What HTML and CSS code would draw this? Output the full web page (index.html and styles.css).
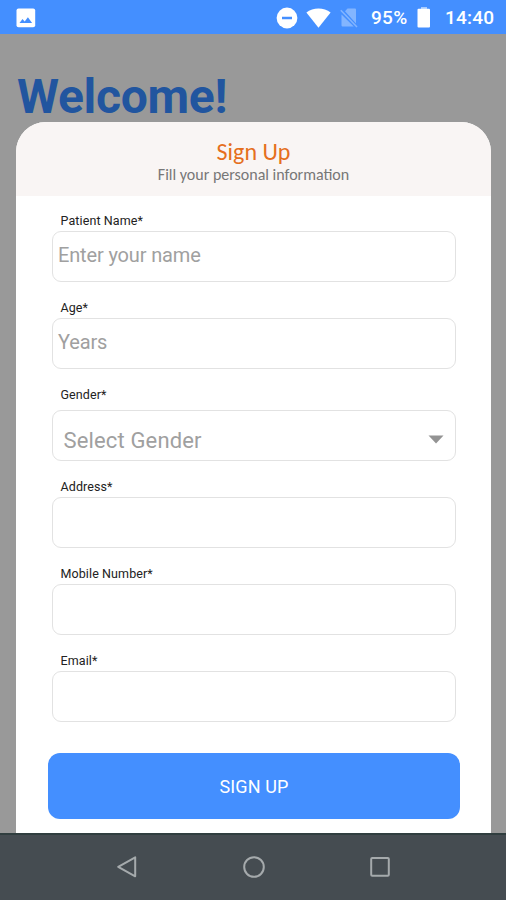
FILE: index.html
```
<!DOCTYPE html>
<html lang="en">
<head>
<meta charset="utf-8">
<title>Sign Up</title>
<link rel="stylesheet" href="styles.css">
</head>
<body>
<div class="screen">
  <header class="status">
    <svg class="picture" width="20" height="20" viewBox="0 0 20 20"><rect x=".5" y=".5" width="18.7" height="18.7" rx="2" fill="#fff"/><path d="M3.5 15l3-4 2.2 2.4 3.2-4.2 4.2 5.8z" fill="#448fff"/></svg>
    <svg class="dnd" width="22" height="22" viewBox="0 0 22 22"><circle cx="11" cy="11" r="10.4" fill="#fff"/><path d="M6 11h10" stroke="#448fff" stroke-width="2.5"/></svg>
    <svg class="wifi" width="25" height="20" viewBox="0 0 25 20"><path d="M.4 4.5C7-.8 18-.8 24.6 4.5L12.5 19.7z" fill="#fff"/></svg>
    <svg class="sim" width="18" height="20" viewBox="0 0 18 20"><path d="M7.5.5h7.5q1 0 1 1v14L5 3.3zM1.5 6.5l12.3 12H2.5q-1 0-1-1z" fill="#83b5ff"/><path d="M.8 2.2L17 19" stroke="#83b5ff" stroke-width="1.5"/></svg>
    <span class="percent">95%</span>
    <svg class="battery" width="14" height="21" viewBox="0 0 14 21"><path d="M4 0h6v2H4z" fill="#a9ccff"/><rect x=".5" y="1.8" width="12.5" height="18.8" rx="1" fill="#fff"/></svg>
    <span class="clock">14:40</span>
  </header>
  <main class="page">
    <h1 class="welcome">Welcome!</h1>
    <form class="card">
      <div class="card-head">
        <h2 class="title">Sign Up</h2>
        <p class="subtitle">Fill your personal information</p>
      </div>
      <div class="fields">
        <div class="field"><label class="label">Patient Name*</label><div class="input">Enter your name</div></div>
        <div class="field"><label class="label">Age*</label><div class="input">Years</div></div>
        <div class="field gender"><label class="label">Gender*</label><div class="input select"><span>Select Gender</span><svg width="16" height="9" viewBox="0 0 16 9"><path d="M.5.5h15L8 8.5z" fill="#939393"/></svg></div></div>
        <div class="field"><label class="label">Address*</label><div class="input"></div></div>
        <div class="field"><label class="label">Mobile Number*</label><div class="input"></div></div>
        <div class="field"><label class="label">Email*</label><div class="input"></div></div>
      </div>
      <button class="submit" type="button">SIGN UP</button>
    </form>
  </main>
  <nav class="nav">
    <svg width="24" height="24" viewBox="0 0 24 24"><path d="M20.2 2.3v19L3.2 11.8z"/></svg>
    <svg width="24" height="24" viewBox="0 0 24 24"><circle cx="12" cy="12" r="9.8"/></svg>
    <svg width="24" height="24" viewBox="0 0 24 24"><rect x="3.2" y="3" width="17.6" height="17.8" rx="1"/></svg>
  </nav>
</div>
</body>
</html>
```
FILE: styles.css
```
* { box-sizing: border-box; }
body { margin: 0; font-family: Roboto, "Liberation Sans", sans-serif; }
h1, h2, p { margin: 0; }
svg { display: block; flex: none; }
.screen { width: 506px; height: 900px; display: flex; flex-direction: column; overflow: hidden; background: #999; }
.status { height: 34px; flex: none; display: flex; align-items: center; padding: 1px 12px 0 16px; background: #448fff; color: #fff; font-size: 19px; font-weight: 500; }
.dnd { margin-left: auto; }
.wifi { margin-left: 8px; }
.sim { margin-left: 9px; }
.percent { margin-left: 13px; width: 38px; letter-spacing: .3px; white-space: nowrap; }
.battery { margin-left: 8px; }
.clock { margin-left: 14px; width: 49px; letter-spacing: .2px; white-space: nowrap; }
.page { flex: 1; min-height: 0; padding: 34px 15px 0 16px; display: flex; flex-direction: column; }
.welcome { height: 54px; flex: none; padding-left: 1px; line-height: 58px; font-size: 48px; font-weight: 700; letter-spacing: -.3px; color: #21559f; white-space: nowrap; }
.card { flex: 1; min-height: 0; background: #fff; border-radius: 30px 30px 0 0; overflow: hidden; display: flex; flex-direction: column; }
.card-head { height: 74px; flex: none; background: #f9f5f4; text-align: center; padding-top: 17px; font-family: Carlito, Lato, sans-serif; }
.title { font-size: 24px; line-height: 26px; font-weight: 400; color: #e56f1d; }
.subtitle { font-size: 16px; line-height: 19px; color: #777; }
.fields { padding: 15px 35px 0 36px; display: flex; flex-direction: column; gap: 16px; }
.field { display: flex; flex-direction: column; height: 71px; }
.label { height: 20px; line-height: 19px; padding-left: 8.5px; font-size: 12.5px; letter-spacing: .1px; color: #222; white-space: nowrap; }
.input { height: 51px; border: 1.5px solid #e2e2e2; border-radius: 9px; padding-left: 5px; line-height: 46px; font-size: 20px; letter-spacing: -.15px; color: #a0a0a0; white-space: nowrap; }
.gender { height: 76px; justify-content: space-between; }
.select { display: flex; align-items: center; justify-content: space-between; padding: 11px 11px 0 10.5px; font-size: 22px; letter-spacing: .15px; }
.select svg { margin-bottom: 3px; }
.submit { width: 412px; height: 66px; margin: 31px 0 0 32px; padding: 1px 0 0; flex: none; border: 0; border-radius: 12px; background: #448fff; color: #fff; font: 400 18px Roboto, sans-serif; letter-spacing: .15px; }
.nav { height: 67px; flex: none; display: flex; justify-content: center; gap: 102.5px; padding: 20px 0 0 1px; background: #454c51; border-top: 2px solid #303e3f; }
.nav svg { fill: none; stroke: #a5aaac; stroke-width: 2; stroke-linejoin: round; }
```
